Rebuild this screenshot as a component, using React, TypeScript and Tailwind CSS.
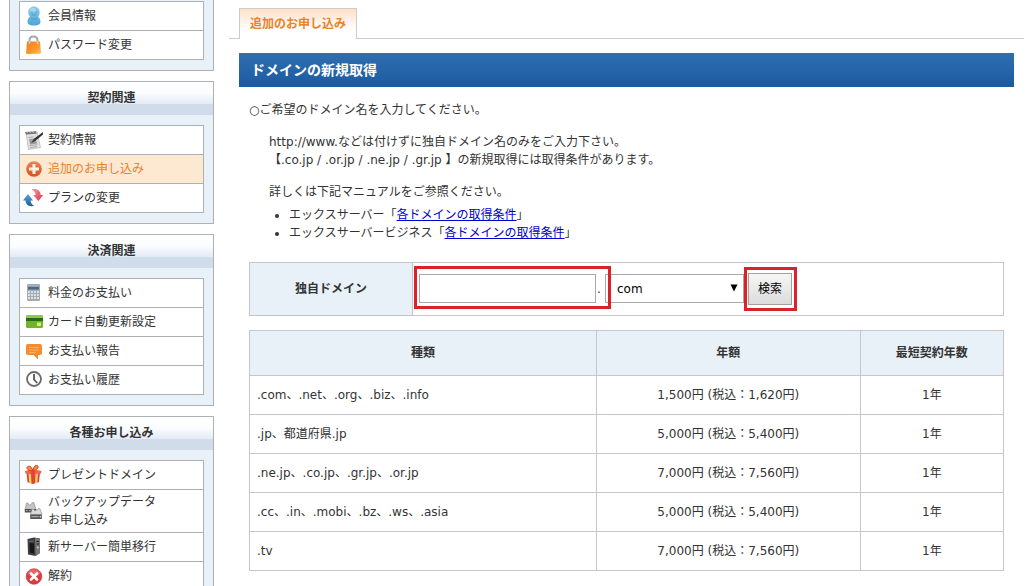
import React from "react";

const UserIcon = () => (
  <svg viewBox="0 0 20 20" className="h-5 w-5 shrink-0" aria-hidden="true">
    <defs>
      <linearGradient id="user" x1="0" y1="0" x2="0" y2="1">
        <stop offset="0" stopColor="#8ccbe8" />
        <stop offset="1" stopColor="#4ba6d4" />
      </linearGradient>
    </defs>
    <path
      d="M11 0.500c3.400 0 5.700 2.500 5.700 5.600 0 2-.7 3.500-1.700 4.700 1.600.9 2.500 2.600 2.500 5.100 0 2.500-3 3.600-6.500 3.600s-6.500-1.100-6.500-3.600c0-2.500.9-4.200 2.500-5.100C6 9.600 5.300 8.100 5.300 6.100 5.300 3 7.600.5 11 .5z"
      fill="url(#user)"
    />
    <ellipse cx="10" cy="4" rx="3" ry="2" fill="#b5def1" opacity=".7" />
    <path d="M8.500 8c1.600 1.500 3.400 1.500 5 0M8 12c1.800 1.500 4.200 1.500 6 0" fill="none" stroke="#3a92c4" strokeWidth=".8" />
    <circle cx="9" cy="6" r=".6" fill="#3a92c4" />
    <circle cx="13" cy="6" r=".6" fill="#3a92c4" />
  </svg>
);

const BagIcon = () => (
  <svg viewBox="0 0 20 20" className="h-5 w-5 shrink-0" aria-hidden="true">
    <defs>
      <linearGradient id="bag" x1="0" y1="0" x2="1" y2="1">
        <stop offset="0" stopColor="#f27a1c" />
        <stop offset=".6" stopColor="#fb9a2b" />
        <stop offset="1" stopColor="#fdc263" />
      </linearGradient>
    </defs>
    <path d="M6.500 9V5.500C6.500 3 8 1.500 10.500 1.500s4 1.500 4 4V9" fill="none" stroke="#a9a9a9" strokeWidth="2" />
    <path d="M4 6.500h13l1 11c0 .8-.5 1.200-1.200 1.200L4.500 19c-1 0-1.500-.6-1.400-1.400z" fill="url(#bag)" />
    <path d="M6.500 6v3M14.500 6v3" stroke="#d2d2d2" strokeWidth="1.500" />
  </svg>
);

const ContractIcon = () => (
  <svg viewBox="0 0 20 20" className="h-5 w-5 shrink-0" aria-hidden="true">
    <path d="M3 2.500l11-.5 3.500 15.500-12 2z" fill="#e2e2e2" stroke="#b3b3b3" strokeWidth=".7" />
    <path d="M2 2l11-.7.600 2.500-10.700.7z" fill="#777" />
    <path d="M3 1l1.500 2M6 1l1.500 2M9 .8l1.500 2" stroke="#ddd" strokeWidth=".7" />
    <path d="M5.500 7.500l5-.5M6.500 15.500l8-.8M7 17.500l7-.9" stroke="#999" strokeWidth=".8" />
    <path d="M6 9l6-.6 2.500 5-7.500 1z" fill="#9b9b9b" />
    <path d="M20 2L11 8.800l-3 4.400 4.500-2.400L20.500 4z" fill="#333" />
  </svg>
);

const PlusIcon = () => (
  <svg viewBox="0 0 20 20" className="h-5 w-5 shrink-0" aria-hidden="true">
    <defs>
      <linearGradient id="plus" x1="0" y1="0" x2="0" y2="1">
        <stop offset="0" stopColor="#ee8657" />
        <stop offset="1" stopColor="#d94f1c" />
      </linearGradient>
    </defs>
    <circle cx="11" cy="10" r="7.800" fill="url(#plus)" />
    <path d="M9.500 5h3v3.500H16v3h-3.500V15h-3v-3.500H6v-3h3.500z" fill="#fff3e8" />
  </svg>
);

const ChangeIcon = () => (
  <svg viewBox="0 0 20 20" className="h-5 w-5 shrink-0 overflow-visible" aria-hidden="true">
    <defs>
      <linearGradient id="changeBlue" x1="0" y1="0" x2="0" y2="1">
        <stop offset="0" stopColor="#58a5d6" />
        <stop offset="1" stopColor="#1c5e96" />
      </linearGradient>
      <linearGradient id="changeRed" x1="0" y1="0" x2="1" y2="1">
        <stop offset="0" stopColor="#f59aa0" />
        <stop offset="1" stopColor="#dc3442" />
      </linearGradient>
    </defs>
    <path d="M0 12.500l5-6.500 5 6.500H7.500c.3 2.500 1.600 4.300 3.800 5.300-4.600 1.300-8.400-.6-8.800-5.300z" fill="url(#changeBlue)" />
    <path d="M8.500 1.500c5-1.300 8.700.7 9.200 5.500h2.500l-4.800 6L10.200 7h2.500C12.500 4.500 11 2.600 8.500 1.500z" fill="url(#changeRed)" />
  </svg>
);

const CalculatorIcon = () => (
  <svg viewBox="0 0 20 20" className="h-5 w-5 shrink-0" aria-hidden="true">
    <rect x="4" y="1" width="13" height="17" rx="1" fill="#a3abb1" />
    <rect x="5" y="2.500" width="11" height="4" fill="#456b8a" />
    <rect x="5" y="2.500" width="11" height="1" fill="#d5dce1" />
    {[8, 11, 14].map((y) =>
      [5, 8, 11, 14].map((x) => (
        <rect key={`${x}-${y}`} x={x} y={y} width="2" height="2" fill="#dce1e5" />
      ))
    )}
  </svg>
);

const CardIcon = () => (
  <svg viewBox="0 0 20 20" className="h-5 w-5 shrink-0" aria-hidden="true">
    <rect x="3" y="3" width="17" height="13" rx="1.500" fill="#6fb52c" />
    <path d="M4.500 3h14c1 0 1.500.6 1.500 1.500V6H3V4.500C3 3.600 3.500 3 4.500 3z" fill="#8fca4b" />
    <rect x="3" y="6" width="17" height="3" fill="#28691b" />
    <rect x="14" y="10.500" width="4" height="3.500" rx=".5" fill="#d2ef72" />
  </svg>
);

const ReportIcon = () => (
  <svg viewBox="0 0 20 20" className="h-5 w-5 shrink-0" aria-hidden="true">
    <path d="M5 3h12c1.200 0 2 .8 2 2v7c0 1.200-.8 2-2 2h-2v4.500L10.500 14H5c-1.200 0-2-.8-2-2V5c0-1.200.8-2 2-2z" fill="#f48b2c" />
    <path d="M6 6.500h10M6 9h10M6 11.500h7" stroke="#fbb26a" />
  </svg>
);

const ClockIcon = () => (
  <svg viewBox="0 0 20 20" className="h-5 w-5 shrink-0" aria-hidden="true">
    <circle cx="11" cy="9" r="7" fill="#fff" stroke="#6b6b6b" strokeWidth="1.800" />
    <path d="M11 4v5.500l3.200 3.500" fill="none" stroke="#555" strokeWidth="1.800" />
  </svg>
);

const GiftIcon = () => (
  <svg viewBox="0 0 20 20" className="h-5 w-5 shrink-0" aria-hidden="true">
    <path d="M3.500 7.500L10 9l7-1.500-1 9.500-6 2-5.500-1.800z" fill="#dd4631" />
    <path d="M2 6l8-2 8.500 2-.5 2.500L10 10.300 2.500 8.500z" fill="#ef6550" />
    <path d="M5.500 8.800l2.500.6.500 9-2.300-.8zM12.500 9.200l2.500-.6-.7 9-2.300.8z" fill="#f9cd6c" />
    <path d="M10 5.500C7.500 6 4 5 4 3s3-2.500 4.500-.5L10 5.500zM10 5.500c.2-3.500 2.300-5.700 4.200-5 2 .8 1 4.500-4.200 5z" fill="#f08a3c" stroke="#dc3a2b" strokeWidth="1" />
    <path d="M8.500 5l3 .2.500 4-2 .8-2-.8z" fill="#e6402e" />
  </svg>
);

const BackupIcon = () => (
  <svg viewBox="0 0 20 20" className="h-5 w-5 shrink-0" aria-hidden="true">
    <path d="M3.500 2h1.500l1 2 2-.3 1-2h2L13 8.500H2z" fill="#c4c4c4" stroke="#8a8a8a" strokeWidth=".6" />
    <path d="M1.800 8h11.400v3.500H1.800z" fill="#4c4c4c" />
    <path d="M3 9.700h1.500M6 9.700h1.500M9 9.700h1.500" stroke="#c4c4c4" />
    <path d="M9 8h1.500l1 1.500 2.500-.3 1-1.500h2l2 6H7.500z" fill="#d8d8d8" stroke="#8a8a8a" strokeWidth=".6" />
    <path d="M7.200 13.500h11.600V18H7.200z" fill="#555" />
    <path d="M8.500 15.700h7" stroke="#bbb" />
    <circle cx="17.300" cy="15.700" r=".8" fill="#eee" />
  </svg>
);

const ServerIcon = () => (
  <svg viewBox="0 0 20 20" className="h-5 w-5 shrink-0" aria-hidden="true">
    <path d="M4.500 2L11 .5l6 1V16l-4.500 3L5 17.500z" fill="#3d3d3d" />
    <path d="M12 1l5 .8V16l-4.500 3z" fill="#757575" />
    <path d="M5.500 4.500l5.500-.6" stroke="#686868" />
    <path d="M6.500 6l4.500.5v10L7 15.500z" fill="#181818" />
    <path d="M13.500 4.500H16M13.500 7H16" stroke="#222" />
    <circle cx="14.800" cy="10.500" r="1" fill="#d0d0d0" />
  </svg>
);

const CancelIcon = () => (
  <svg viewBox="0 0 20 20" className="h-5 w-5 shrink-0" aria-hidden="true">
    <circle cx="11" cy="10.500" r="7.800" fill="#d93e45" stroke="#c3292f" strokeWidth=".6" />
    <ellipse cx="11" cy="7" rx="6" ry="3.700" fill="#ec858a" opacity=".6" />
    <path d="M8 7.500l6 6M14 7.500l-6 6" stroke="#fff" strokeWidth="2.600" strokeLinecap="round" />
  </svg>
);

interface MenuItem {
  label: string;
  icon: React.ReactNode;
  active?: boolean;
}

const contractItems: MenuItem[] = [
  { label: "契約情報", icon: <ContractIcon /> },
  { label: "追加のお申し込み", icon: <PlusIcon />, active: true },
  { label: "プランの変更", icon: <ChangeIcon /> },
];

const paymentItems: MenuItem[] = [
  { label: "料金のお支払い", icon: <CalculatorIcon /> },
  { label: "カード自動更新設定", icon: <CardIcon /> },
  { label: "お支払い報告", icon: <ReportIcon /> },
  { label: "お支払い履歴", icon: <ClockIcon /> },
];

const applyItems: MenuItem[] = [
  { label: "プレゼントドメイン", icon: <GiftIcon /> },
  { label: "バックアップデータ\nお申し込み", icon: <BackupIcon /> },
  { label: "新サーバー簡単移行", icon: <ServerIcon /> },
  { label: "解約", icon: <CancelIcon /> },
];

const prices = [
  { type: ".com、.net、.org、.biz、.info", price: "1,500円 (税込：1,620円)" },
  { type: ".jp、都道府県.jp", price: "5,000円 (税込：5,400円)" },
  { type: ".ne.jp、.co.jp、.gr.jp、.or.jp", price: "7,000円 (税込：7,560円)" },
  { type: ".cc、.in、.mobi、.bz、.ws、.asia", price: "5,000円 (税込：5,400円)" },
  { type: ".tv", price: "7,000円 (税込：7,560円)" },
];

const MenuList = ({ items }: { items: MenuItem[] }) => (
  <ul className="border-x border-b border-[#adb0b5] bg-white">
    {items.map((item) => (
      <li key={item.label} className="border-t border-[#adb0b5]">
        <a
          href="#"
          className={`flex min-h-7 items-center gap-[5px] pl-[3px] ${
            item.active ? "bg-[#fde8d2] text-[#e8832a]" : ""
          }`}
        >
          {item.icon}
          <span className="whitespace-pre-line py-[3px]">{item.label}</span>
        </a>
      </li>
    ))}
  </ul>
);

const MenuBox = ({ title, items }: { title: string; items: MenuItem[] }) => (
  <section className="border border-[#adb0b5] bg-[#e8f0f8]">
    <h2 className="flex h-[33px] items-center justify-center bg-[linear-gradient(#ffffff,#fafcfe_35%,#e3ebf5_66%,#d0dcea_67%,#d0dcea)] pb-0.5 font-bold">
      {title}
    </h2>
    <div className="px-[9px] py-2.5">
      <MenuList items={items} />
    </div>
  </section>
);

export default function App() {
  return (
    <div
      lang="ja"
      className="flex h-screen items-start gap-[15px] overflow-hidden bg-white pl-[9px] pr-3 font-['DejaVu_Sans','Noto_Sans_CJK_JP',sans-serif] text-[12px] leading-[18px] text-[#333]"
    >
      <nav className="flex w-[205px] shrink-0 flex-col gap-2.5">
        <section className="border-x border-b border-[#adb0b5] bg-[#e8f0f8] px-[9px] pb-2.5 pt-px">
          <MenuList
            items={[
              { label: "会員情報", icon: <UserIcon /> },
              { label: "パスワード変更", icon: <BagIcon /> },
            ]}
          />
        </section>
        <MenuBox title="契約関連" items={contractItems} />
        <MenuBox title="決済関連" items={paymentItems} />
        <MenuBox title="各種お申し込み" items={applyItems} />
      </nav>

      <main className="min-w-0 flex-1 pt-2">
        <div className="flex border-b border-[#ccc] pl-2.5">
          <a
            href="#"
            className="-mb-px flex h-[31px] items-center border-x border-t border-[#ccc] bg-linear-to-b from-[#fde0c8] to-white to-70% px-2.5 font-bold text-[#e8832a]"
          >
            追加のお申し込み
          </a>
        </div>

        <div className="px-2.5 pt-3.5">
          <h1 className="flex h-[34px] items-center bg-linear-to-b from-[#2e6fb0] to-[#1c5a9f] px-3 text-[14px] font-bold text-white">
            ドメインの新規取得
          </h1>

          <div className="px-2.5 pt-3.5">
            <p>○ご希望のドメイン名を入力してください。</p>
            <div className="pl-5 pt-3.5">
              <p>
                http://www.などは付けずに独自ドメイン名のみをご入力下さい。
                <br />
                【.co.jp / .or.jp / .ne.jp / .gr.jp 】の新規取得には取得条件があります。
              </p>
              <p className="pt-3.5">詳しくは下記マニュアルをご参照ください。</p>
              <ul className="list-disc pl-5 pt-[5px]">
                <li>
                  エックスサーバー「
                  <a href="#" className="text-[#0000cc] underline">各ドメインの取得条件</a>」
                </li>
                <li>
                  エックスサーバービジネス「
                  <a href="#" className="text-[#0000cc] underline">各ドメインの取得条件</a>」
                </li>
              </ul>
            </div>

            <form
              className="mt-5 flex h-[54px] border border-[#c3c6ca]"
              onSubmit={(e) => e.preventDefault()}
            >
              <label
                htmlFor="domain"
                className="flex w-[163px] items-center justify-center border-r border-[#c3c6ca] bg-[#e8f0f8] font-bold"
              >
                独自ドメイン
              </label>
              <div className="flex items-center pb-px pl-1.5">
                <div className="relative flex items-center">
                  <input id="domain" type="text" className="h-[29px] w-[177px] border border-[#a9a9a9] bg-white px-2 outline-none" />
                  <span className="w-[9px] pl-px">.</span>
                  <span className="pointer-events-none absolute -bottom-1.5 -left-[5px] -right-1.5 -top-2 z-10 border-3 border-[#d8232a]" />
                </div>
                <div className="relative">
                  <select
                    aria-label="トップレベルドメイン"
                    className="block h-[29px] w-[139px] appearance-none rounded-none border border-[#a9a9a9] bg-white pl-[11px] text-black outline-none"
                  >
                    <option>com</option>
                    <option>net</option>
                    <option>org</option>
                  </select>
                  <svg viewBox="0 0 8 8" className="pointer-events-none absolute right-1.5 top-2.5 h-2 w-2" aria-hidden="true">
                    <path d="M0.500 0.500h7L4 7.500z" fill="#000" />
                  </svg>
                </div>
                <div className="relative ml-1">
                  <button
                    type="submit"
                    className="block h-8 w-11 border border-[#a0a0a0] bg-linear-to-b from-[#f6f6f6] to-[#dcdcdc] text-black"
                  >
                    検索
                  </button>
                  <span className="pointer-events-none absolute -bottom-1.5 -left-1 -right-[5px] -top-1.5 border-3 border-[#d8232a]" />
                </div>
              </div>
            </form>

            <table className="mt-3.5 w-full table-fixed border-collapse">
              <thead>
                <tr className="h-[45px] bg-[#e8f0f8]">
                  <th className="w-[46%] border border-[#c3c6ca]">種類</th>
                  <th className="w-[35%] border border-[#c3c6ca]">年額</th>
                  <th className="w-[19%] border border-[#c3c6ca]">最短契約年数</th>
                </tr>
              </thead>
              <tbody>
                {prices.map((row) => (
                  <tr key={row.type} className="h-[39px]">
                    <td className="border border-[#c3c6ca] px-[7px]">{row.type}</td>
                    <td className="border border-[#c3c6ca] text-center">{row.price}</td>
                    <td className="border border-[#c3c6ca] text-center">1年</td>
                  </tr>
                ))}
              </tbody>
            </table>
          </div>
        </div>
      </main>
    </div>
  );
}
